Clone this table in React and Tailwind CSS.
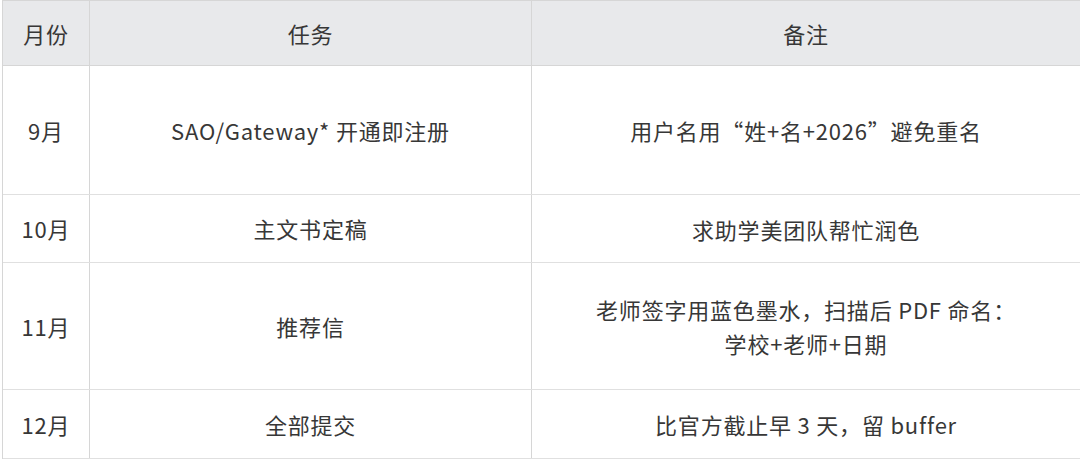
import React from "react";

const rows = [
  { month: "9月", task: "SAO/Gateway* 开通即注册", note: ["用户名用“姓+名+2026”避免重名"], h: "h-[129px]" },
  { month: "10月", task: "主文书定稿", note: ["求助学美团队帮忙润色"], h: "h-[68px]" },
  { month: "11月", task: "推荐信", note: ["老师签字用蓝色墨水，扫描后 PDF 命名：", "学校+老师+日期"], h: "h-[127px]" },
  { month: "12月", task: "全部提交", note: ["比官方截止早 3 天，留 buffer"], h: "h-[69px]" },
];

const App = () => {
  return (
    <div
      className="w-[1080px] h-[459px] overflow-hidden bg-white pl-[2px] text-[#373737] text-[22px] tracking-[0.8px]"
      style={{ fontFamily: '"Noto Sans CJK SC", "Noto Sans", sans-serif' }}
    >
      <div className="border-t border-l border-[#d6d6d6]">
        {/* Header */}
        <div className="grid grid-cols-[87px_442px_1fr] h-[65px] bg-[#e8e9eb] border-b border-[#d6d6d6]">
          <div className="flex items-center justify-center border-r border-[#d6d6d6]">月份</div>
          <div className="flex items-center justify-center border-r border-[#d6d6d6]">任务</div>
          <div className="flex items-center justify-center">备注</div>
        </div>

        {/* Body */}
        {rows.map((r) => (
          <div key={r.month} className={`grid grid-cols-[87px_442px_1fr] border-b border-[#e0e0e0] ${r.h}`}>
            <div className="flex items-center justify-center border-r border-[#d6d6d6]">{r.month}</div>
            <div className="flex items-center justify-center border-r border-[#d6d6d6]">{r.task}</div>
            <div className="flex flex-col items-center justify-center leading-[34px]">
              {r.note.map((line) => (
                <span key={line}>{line}</span>
              ))}
            </div>
          </div>
        ))}
      </div>
    </div>
  );
};

export default App;
